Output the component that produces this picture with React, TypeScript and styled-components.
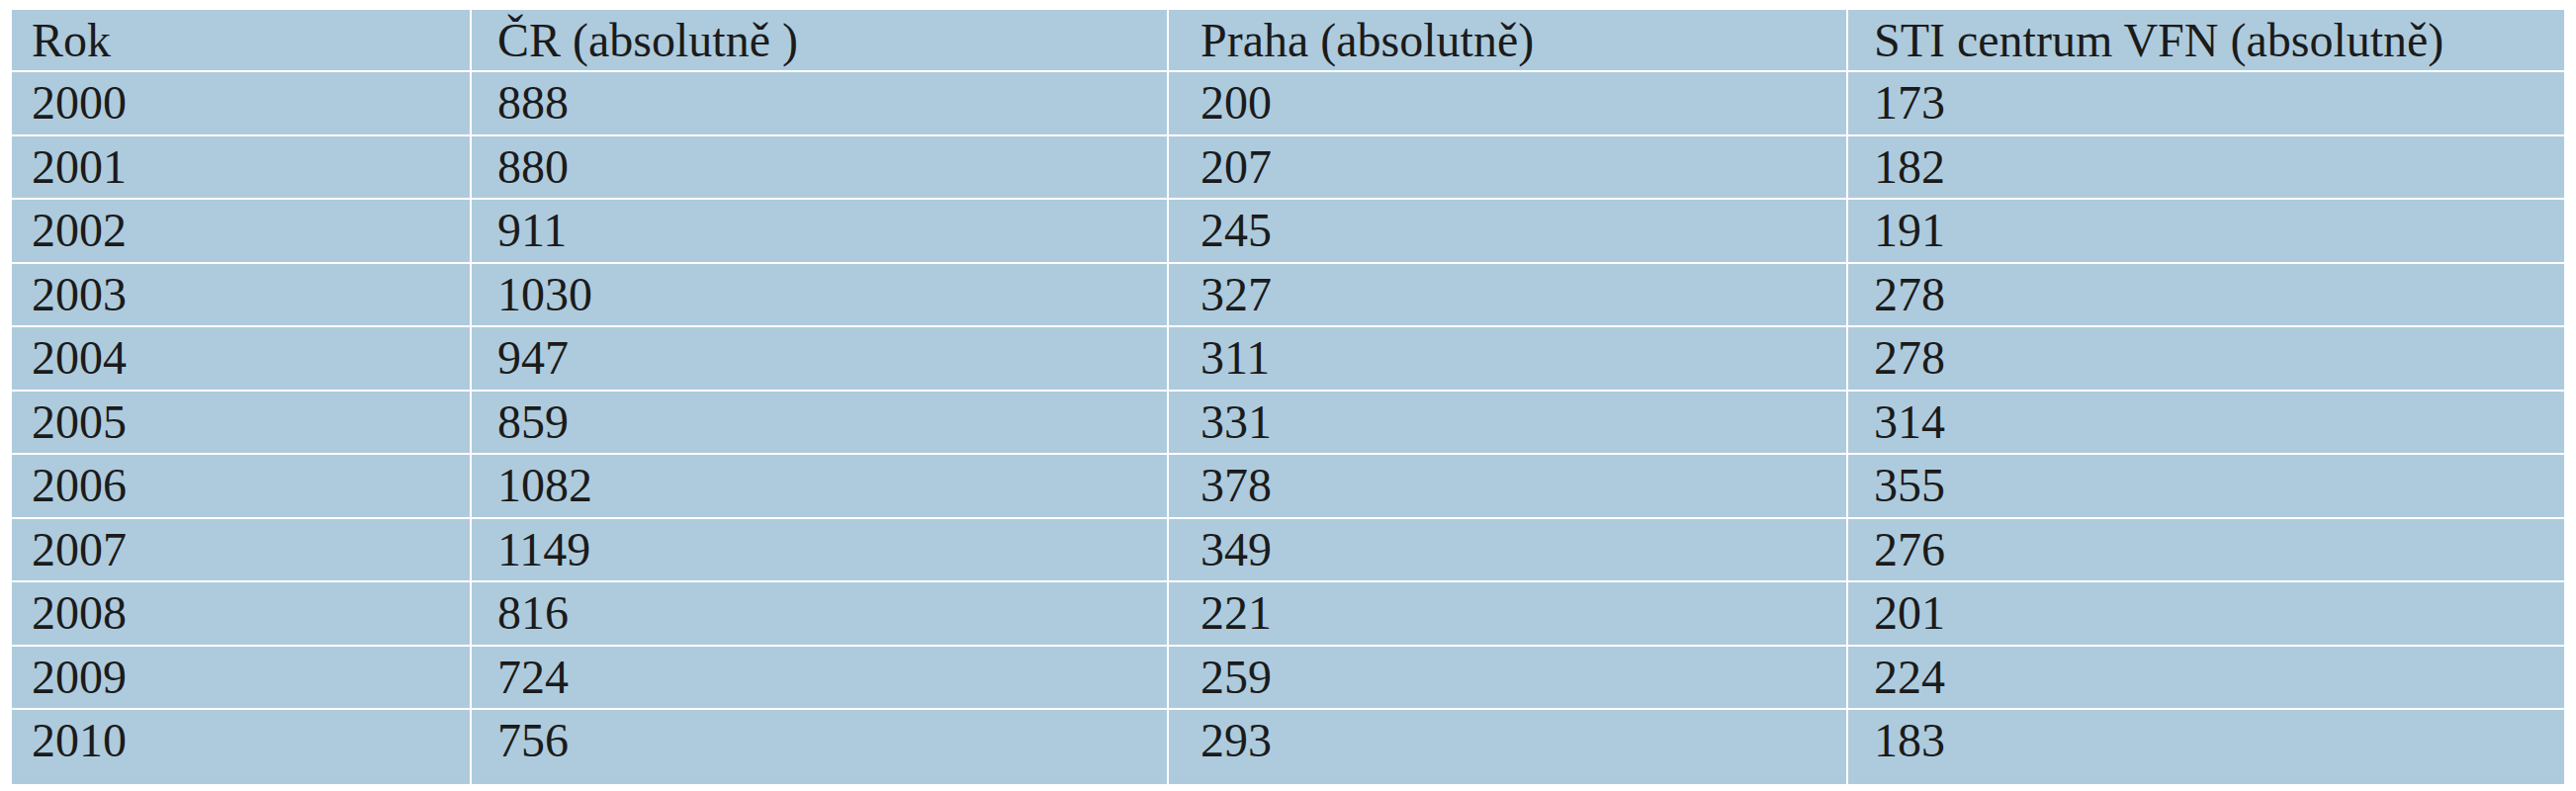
import styled, { createGlobalStyle } from "styled-components";

const GlobalStyle = createGlobalStyle`
  html, body {
    margin: 0;
    padding: 0;
    background: #fff;
  }
`;

const Page = styled.div`
  padding: 10px 12px;
`;

const Grid = styled.div`
  display: grid;
  grid-template-columns: 463px 703px 685px 724px;
  grid-template-rows: 61px repeat(10, 62.5px) 75px;
  gap: 2px;
  width: 2581px;
  background: #fff;
  font-family: "Liberation Serif", "Times New Roman", serif;
  font-size: 48px;
  color: #1b1b1b;
`;

const Cell = styled.div<{ $indent: number }>`
  background: #aecbdd;
  padding: 7px 0 0 ${(p) => p.$indent}px;
  line-height: 48px;
  white-space: nowrap;
`;

const indents = [20, 26, 32, 26];

const headers = [
  "Rok",
  "ČR (absolutně )",
  "Praha (absolutně)",
  "STI centrum VFN (absolutně)",
];

const rows: [number, number, number, number][] = [
  [2000, 888, 200, 173],
  [2001, 880, 207, 182],
  [2002, 911, 245, 191],
  [2003, 1030, 327, 278],
  [2004, 947, 311, 278],
  [2005, 859, 331, 314],
  [2006, 1082, 378, 355],
  [2007, 1149, 349, 276],
  [2008, 816, 221, 201],
  [2009, 724, 259, 224],
  [2010, 756, 293, 183],
];

export default function App() {
  return (
    <>
      <GlobalStyle />
      <Page>
        <Grid>
          {headers.map((h, i) => (
            <Cell key={h} $indent={indents[i]}>
              {h}
            </Cell>
          ))}
          {rows.map((r) =>
            r.map((v, i) => (
              <Cell key={`${r[0]}-${i}`} $indent={indents[i]}>
                {v}
              </Cell>
            ))
          )}
        </Grid>
      </Page>
    </>
  );
}
